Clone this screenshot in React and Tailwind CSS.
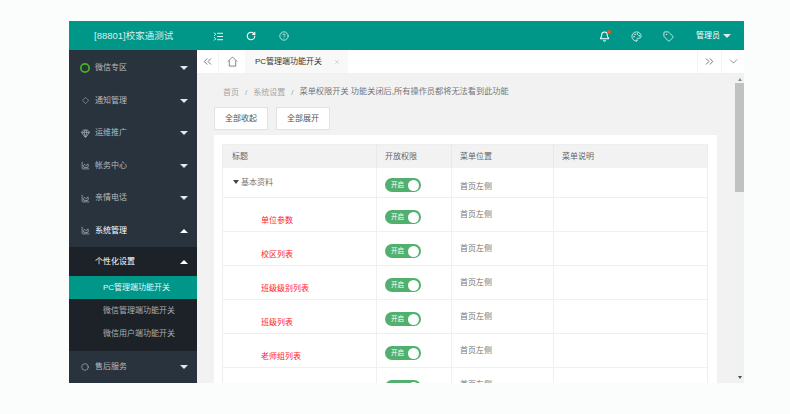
import {
  ChevronsLeft, ChevronsRight, ChevronDown, X, RotateCw, CircleHelp, Bell, Palette, Tag,
  ListCollapse, Gem, ChartArea, Circle, Diamond,
} from "lucide-react";

const Caret = ({ up, className = "" }) => (
  <span
    className={`inline-block w-0 h-0 border-x-[4px] border-x-transparent ${
      up ? "border-b-[4px] border-b-white" : "border-t-[4px] border-t-[#e4e6e8]"
    } ${className}`}
  />
);

const NavItem = ({ icon, label, up, active }) => (
  <div className="h-[32.5px] flex items-center pl-[9px] pr-[9px]">
    <span className="w-[14px] flex justify-center text-[#aeb4b9]">{icon}</span>
    <span className={`ml-[3px] flex-1 ${active ? "text-white" : "text-[#b6babe]"}`}>{label}</span>
    <Caret up={up} />
  </div>
);

const Switch = () => (
  <div className="w-[36px] h-[14px] rounded-full bg-[#52b06e] flex items-center pl-[6px] pr-[2px] justify-between">
    <span className="text-[6.5px] text-white leading-none">开启</span>
    <span className="w-[11px] h-[11px] rounded-full bg-white" />
  </div>
);

const rows = ["单位参数", "校区列表", "班级级别列表", "班级列表", "老师组列表", ""];

export default function App() {
  return (
    <div className="min-h-[414px] bg-[#fbfcfc] pt-[21px] pl-[69px] font-['Liberation_Sans','Noto_Sans_CJK_SC',sans-serif] text-[8px] overflow-hidden">
      <div className="w-[675px] h-[362px] flex flex-col overflow-hidden">
        {/* Header */}
        <div className="h-[29px] shrink-0 bg-[#009688] flex items-center pt-[1px] text-white">
          <div className="w-[128px] text-[9.5px] text-[#d8efec] pl-[25px]">[88801]校家通测试</div>
          <ListCollapse size={11} className="ml-[16px]" />
          <RotateCw size={10} strokeWidth={2.6} className="ml-[22px]" />
          <CircleHelp size={10} className="ml-[23px] text-[#d8efec]" />
          <div className="relative ml-auto">
            <Bell size={11} strokeWidth={2.2} />
            <span className="absolute -top-[1px] -right-[1px] w-[4px] h-[4px] rounded-full bg-[#f4511e]" />
          </div>
          <Palette size={11} className="ml-[21px] text-[#d8efec]" />
          <Tag size={11} className="ml-[21px] text-[#d8efec]" />
          <span className="ml-[22px] text-[8px]">管理员</span>
          <Caret className="ml-[3px] mr-[13px]" />
        </div>

        <div className="flex flex-1 min-h-0">
          {/* Sidebar */}
          <div className="w-[128px] shrink-0 bg-[#28333e] overflow-hidden pt-[2px]">
            <NavItem icon={<Circle size={10} strokeWidth={4} className="text-[#49b324]" />} label="微信专区" />
            <NavItem icon={<Diamond size={7} />} label="通知管理" />
            <NavItem icon={<Gem size={9} />} label="运维推广" />
            <NavItem icon={<ChartArea size={9} />} label="帐务中心" />
            <NavItem icon={<ChartArea size={9} />} label="亲情电话" />
            <NavItem icon={<ChartArea size={9} />} label="系统管理" up active />
            <div className="bg-[#1d2229] h-[104px] pt-[1px]">
              <div className="h-[28px] flex items-center pl-[26px] pr-[9px] text-white">
                <span className="flex-1">个性化设置</span>
                <Caret up />
              </div>
              <div className="h-[23px] bg-[#009688] flex items-center pl-[34px] text-[#e8f6f4]">PC管理端功能开关</div>
              <div className="h-[23px] flex items-center pl-[34px] text-[#a9adb2]">微信管理端功能开关</div>
              <div className="h-[23px] flex items-center pl-[34px] text-[#a9adb2]">微信用户端功能开关</div>
            </div>
            <NavItem icon={<Circle size={8} />} label="售后服务" />
          </div>

          <div className="flex-1 flex flex-col min-w-0">
            {/* Tabs */}
            <div className="h-[24px] shrink-0 bg-white flex items-center text-[#555b61] border-b border-[#f0f0f0]">
              <div className="w-[22px] h-full flex items-center justify-center border-r border-[#f4f4f4]">
                <ChevronsLeft size={13} strokeWidth={1.5} />
              </div>
              <div className="w-[26px] h-full flex items-center justify-center">
                <svg width="11" height="11" viewBox="0 0 12 12" fill="none" stroke="currentColor" strokeWidth="0.8">
                  <path d="M1 6 6 1l5 5M2.5 5v6h7V5" />
                </svg>
              </div>
              <div className="w-[103px] h-full bg-[#f8f8f8] flex items-center pl-[10px] text-[#333]">
                <span className="flex-1">PC管理端功能开关</span>
                <X size={6} className="mr-[8px] text-[#b5b5b5]" />
              </div>
              <div className="ml-auto w-[24px] h-full flex items-center justify-center border-l border-[#f4f4f4]">
                <ChevronsRight size={13} strokeWidth={1.5} />
              </div>
              <div className="w-[23px] h-full flex items-center justify-center border-l border-[#f4f4f4]">
                <ChevronDown size={13} strokeWidth={1.2} />
              </div>
            </div>

            <div className="flex-1 flex min-h-0">
              {/* Content */}
              <div className="flex-1 min-w-0 bg-[#f2f2f2] overflow-hidden pl-[17px] pr-[18px]">
                <div className="h-[33px] pt-[4px] flex items-center pl-[9px] gap-[6px] text-[#a5a5a5]">
                  <span>首页</span>
                  <span>/</span>
                  <span>系统设置</span>
                  <span>/</span>
                  <span className="text-[#777] text-[8.2px]">菜单权限开关 功能关闭后,所有操作员都将无法看到此功能</span>
                </div>
                <div className="flex gap-[8px]">
                  <div className="w-[54px] h-[23px] bg-white border border-[#e2e2e2] flex items-center justify-center text-[#555]">全部收起</div>
                  <div className="w-[54px] h-[23px] bg-white border border-[#e2e2e2] flex items-center justify-center text-[#555]">全部展开</div>
                </div>
                <div className="mt-[5px] bg-white pt-[9px] pl-[8px] pr-[9px] pb-[20px]">
                  <div className="border border-[#eeeeee] text-[#666]">
                    <div className="h-[23px] bg-[#f2f2f2] flex items-center">
                      <div className="w-[154px] pl-[9px] h-full flex items-center border-r border-[#e8e8e8]">标题</div>
                      <div className="w-[75px] pl-[8px] h-full flex items-center border-r border-[#e8e8e8]">开放权限</div>
                      <div className="w-[102px] pl-[8px] h-full flex items-center border-r border-[#e8e8e8]">菜单位置</div>
                      <div className="flex-1 pl-[8px]">菜单说明</div>
                    </div>
                    <div className="h-[30px] flex border-b border-[#f0f0f0]">
                      <div className="w-[154px] pl-[10px] pt-[9px] flex items-start border-r border-[#f0f0f0] text-[#777]">
                        <span className="mt-[3px] mr-[2px] w-0 h-0 border-x-[3.5px] border-x-transparent border-t-[4px] border-t-[#444]" />
                        基本资料
                      </div>
                      <div className="w-[75px] pl-[8px] pt-[10px] border-r border-[#f0f0f0]"><Switch /></div>
                      <div className="w-[102px] pl-[8px] pt-[13px] border-r border-[#f0f0f0] text-[#777]">首页左侧</div>
                    </div>
                    {rows.map((r, i) => (
                      <div key={i} className="h-[34px] flex border-b border-[#f0f0f0]">
                        <div className="w-[154px] pl-[38px] pt-[17px] border-r border-[#f0f0f0] text-[#ff1a2e]">{r}</div>
                        <div className="w-[75px] pl-[8px] pt-[12px] border-r border-[#f0f0f0]"><Switch /></div>
                        <div className="w-[102px] pl-[8px] pt-[11px] border-r border-[#f0f0f0] text-[#777]">首页左侧</div>
                      </div>
                    ))}
                  </div>
                </div>
              </div>
              {/* Scrollbar */}
              <div className="w-[9px] shrink-0 bg-[#f1f1f1] flex flex-col items-center pt-[4px] pb-[4px]">
                <span className="w-0 h-0 border-x-[2.5px] border-x-transparent border-b-[3px] border-b-[#8a8a8a]" />
                <div className="w-full h-[109px] mt-[2px] bg-[#c1c1c1]" />
                <span className="mt-auto w-0 h-0 border-x-[2.5px] border-x-transparent border-t-[3px] border-t-[#505050]" />
              </div>
            </div>
          </div>
        </div>
      </div>
    </div>
  );
}
